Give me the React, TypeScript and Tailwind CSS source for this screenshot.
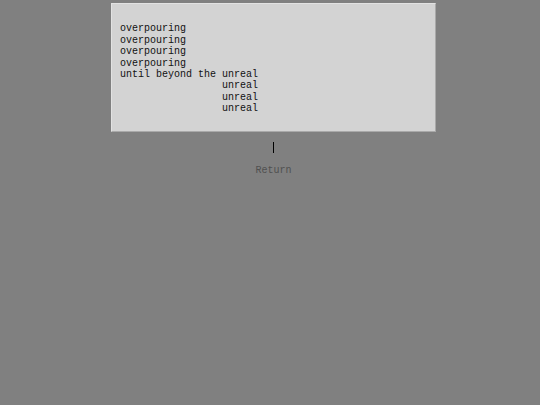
export default function App() {
  const text = `
overpouring
overpouring
overpouring
overpouring
until beyond the unreal
                 unreal
                 unreal
                 unreal`;
  return (
    <div className="w-[540px] h-[405px] bg-[#808080] pt-[3px] pl-[111px]" style={{ fontFamily: '"Liberation Mono", monospace' }}>
      <div className="w-[325px] h-[129px] bg-[#d3d3d3] border border-t-[#e2e2e2] border-l-[#e2e2e2] border-r-[#a9a9a9] border-b-[#a9a9a9] pt-[8px] pl-[8px]">
        <pre className="text-[10px] leading-[11.4px] text-[#111] m-0" style={{ fontFamily: '"Liberation Mono", monospace' }}>{text}</pre>
      </div>
      <div className="w-[325px] flex flex-col items-center">
        <div className="mt-[10px] w-px h-[11px] bg-black" />
        <div className="mt-[12px] text-[10px] leading-[12px] text-[#505050]">Return</div>
      </div>
    </div>
  );
}
